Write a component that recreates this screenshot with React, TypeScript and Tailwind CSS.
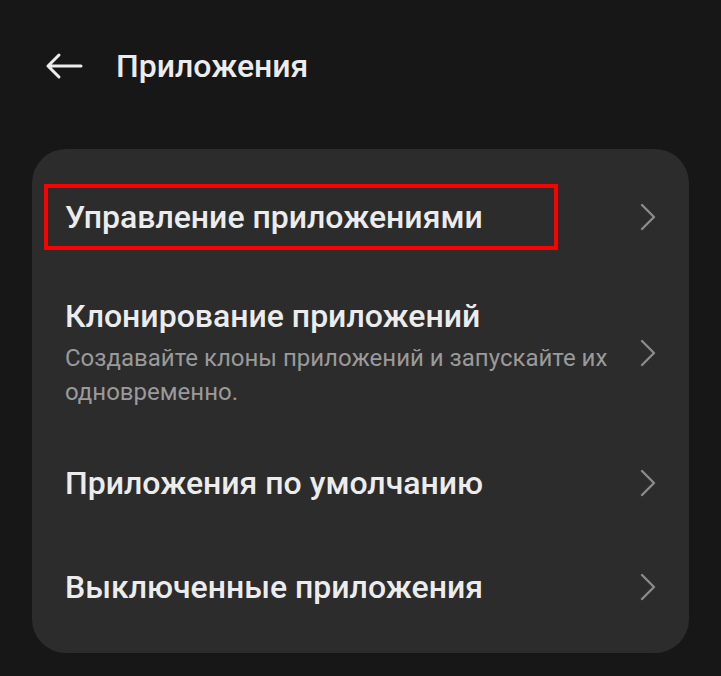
import React from "react";

const Chevron = () => (
  <svg width="18" height="28" viewBox="0 0 18 28" fill="none" className="shrink-0">
    <path d="M3 2 L15 14 L3 26" stroke="#8a8a8a" strokeWidth="2.4" strokeLinecap="round" strokeLinejoin="round" />
  </svg>
);

export default function App() {
  return (
    <div className="w-[721px] h-[676px] bg-[#171717] overflow-hidden" style={{ fontFamily: "Roboto, 'Noto Sans', sans-serif" }}>
      <div className="flex items-center h-[132px] pl-[44px]">
        <svg width="40" height="28" viewBox="0 0 40 28" fill="none">
          <path d="M37 14 H4 M15 3 L4 14 L15 25" stroke="#ececec" strokeWidth="3" strokeLinecap="round" strokeLinejoin="round" />
        </svg>
        <span className="ml-[32px] text-[32px] font-medium text-[#ececec] leading-[40px]">Приложения</span>
      </div>
      <div className="mx-[32px] mt-[17px] w-[657px] h-[504px] rounded-[34px] bg-[#2c2c2c] pt-[35px]">
        <div className="flex items-center justify-between pr-[32px] h-[66px]">
          <div className="ml-[12px] border-[4px] border-[#ff0000] w-[514px] h-[66px] flex items-center pl-[17px]">
            <span className="text-[32px] font-medium text-[#ececec] leading-[40px]">Управление приложениями</span>
          </div>
          <Chevron />
        </div>
        <div className="flex items-center justify-between pr-[32px] mt-[46px]">
          <div className="pl-[33px]">
            <div className="text-[32px] font-medium text-[#ececec] leading-[40px]">Клонирование приложений</div>
            <div className="text-[24px] text-[#9a9a9a] leading-[34px] mt-[5px] w-[560px]">Создавайте клоны приложений и запускайте их одновременно.</div>
          </div>
          <Chevron />
        </div>
        <div className="flex items-center justify-between pr-[32px] mt-[54px] h-[40px]">
          <span className="pl-[33px] text-[32px] font-medium text-[#ececec] leading-[40px]">Приложения по умолчанию</span>
          <Chevron />
        </div>
        <div className="flex items-center justify-between pr-[32px] mt-[64px] h-[40px]">
          <span className="pl-[33px] text-[32px] font-medium text-[#ececec] leading-[40px]">Выключенные приложения</span>
          <Chevron />
        </div>
      </div>
    </div>
  );
}
